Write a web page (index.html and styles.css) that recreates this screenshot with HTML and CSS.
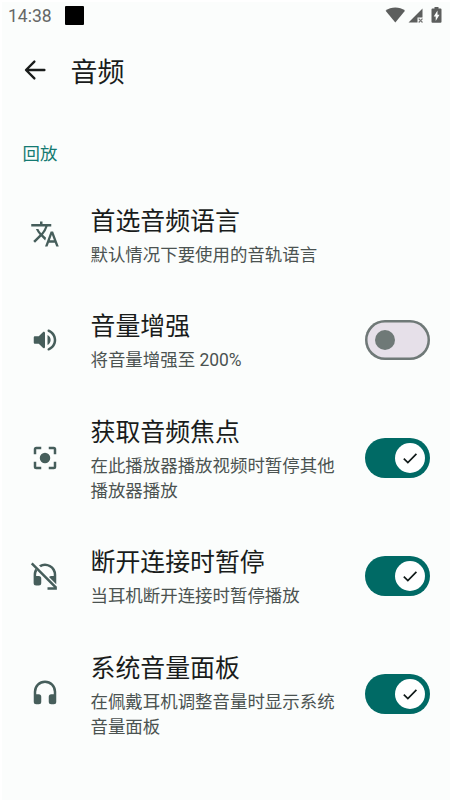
FILE: index.html
```html
<!DOCTYPE html>
<html lang="zh-CN">
<head>
<meta charset="utf-8">
<title>音频</title>
<link rel="stylesheet" href="styles.css">
</head>
<body>
<div class="screen">
  <div class="statusbar">
    <span class="clock">14:38</span>
    <span class="notice"></span>
    <svg class="status-icons" viewBox="0 0 60 20">
      <path d="M.6 5.700C6 1.400 14.600 1.400 20 5.700L10.300 17.500Z"/>
      <path d="M37.500 3.500V12.500H32.500V17.500H23.500Z"/>
      <path class="cross" d="M33.700 13.700l3.800 3.800m0-3.800l-3.800 3.800"/>
      <path fill-rule="evenodd" d="M49.500 2h4v1.500h2q1 0 1 1V16.700q0 1-1 1h-8q-1 0-1-1V4.500q0-1 1-1h2ZM52.500 5.500L48.700 11.500h2V16L54.500 9.800h-2Z"/>
    </svg>
  </div>
  <header class="appbar">
    <svg class="icon back" viewBox="0 0 24 24"><path d="M19.500 12H5.300M11.500 5.300L4.800 12l6.700 6.700"/></svg>
    <h1>音频</h1>
  </header>
  <h2 class="section">回放</h2>
  <main>
    <div class="row">
      <svg class="icon" viewBox="0 0 24 24"><path d="M12.870 15.070l-2.540-2.510.030-.030A17.520 17.520 0 0 0 14.070 6H17V4h-7V2H8v2H1v1.990h11.170C11.500 7.920 10.440 9.750 9 11.350 8.070 10.320 7.300 9.190 6.690 8h-2c.73 1.630 1.730 3.170 2.980 4.560l-5.090 5.020L4 19l5-5 3.110 3.110.760-2.040zM18.500 10h-2L12 22h2l1.120-3h4.750L21 22h2l-4.500-12zm-2.620 7l1.620-4.330L19.120 17h-3.240z"/></svg>
      <div class="text"><h3>首选音频语言</h3><p>默认情况下要使用的音轨语言</p></div>
    </div>
    <div class="row">
      <svg class="icon" viewBox="0 0 24 24"><path d="M3 10v4c0 .55.450 1 1 1h3l3.290 3.290c.63.630 1.710.180 1.710-.710V6.410c0-.89-1.080-1.340-1.710-.710L7 9H4c-.55 0-1 .450-1 1zm13.500 2A4.500 4.500 0 0 0 14 7.970v8.050c1.480-.73 2.500-2.250 2.500-4.020zM14 4.450v.2c0 .380.250.710.600.850C17.180 6.530 19 9.060 19 12s-1.820 5.470-4.400 6.500c-.36.140-.6.470-.6.850v.2c0 .630.630 1.070 1.210.850C18.600 19.110 21 15.840 21 12s-2.400-7.110-5.790-8.400c-.58-.23-1.210.220-1.210.850z"/></svg>
      <div class="text"><h3>音量增强</h3><p>将音量增强至 200%</p></div>
      <div class="switch"><span class="thumb"></span></div>
    </div>
    <div class="row">
      <svg class="icon" viewBox="0 0 24 24"><circle cx="12" cy="12" r="4.200"/><path class="line" d="M4 9V5q0-1 1-1h4M15 4h4q1 0 1 1v4M20 15v4q0 1-1 1h-4M9 20H5q-1 0-1-1v-4"/></svg>
      <div class="text"><h3>获取音频焦点</h3><p>在此播放器播放视频时暂停其他播放器播放</p></div>
      <div class="switch on"><span class="thumb"><svg viewBox="0 0 16 16"><path d="M2.500 8.500l3.600 3.600L13.700 4.300"/></svg></span></div>
    </div>
    <div class="row">
      <svg class="icon" viewBox="0 0 24 24"><path d="M2.900 11C2.900 9.200 3.400 7.600 4.300 6.200L5.800 7.700C5.200 8.700 4.900 9.800 4.900 11v1H7q2 0 2 2v3.500q0 2-2 2H4.900q-2 0-2-2ZM7.200 3.400A9 9 0 0 1 21 11v7.600L16.600 14.100L15.200 12.700Q16 12 17 12h2v-1A7 7 0 0 0 8.700 4.900Z"/><path class="line" d="M1.400 1.900L21 21.500M14 22h7.500"/></svg>
      <div class="text"><h3>断开连接时暂停</h3><p>当耳机断开连接时暂停播放</p></div>
      <div class="switch on"><span class="thumb"><svg viewBox="0 0 16 16"><path d="M2.500 8.500l3.600 3.600L13.700 4.300"/></svg></span></div>
    </div>
    <div class="row">
      <svg class="icon" viewBox="0 0 24 24"><path d="M12 1.200a9 9 0 0 0-9 9V18.200a2 2 0 0 0 2 2h2a2 2 0 0 0 2-2v-4a2 2 0 0 0-2-2H5v-2a7 7 0 0 1 14 0v2h-2a2 2 0 0 0-2 2v4a2 2 0 0 0 2 2h2a2 2 0 0 0 2-2V10.200a9 9 0 0 0-9-9z"/></svg>
      <div class="text"><h3>系统音量面板</h3><p>在佩戴耳机调整音量时显示系统音量面板</p></div>
      <div class="switch on"><span class="thumb"><svg viewBox="0 0 16 16"><path d="M2.500 8.500l3.600 3.600L13.700 4.300"/></svg></span></div>
    </div>
  </main>
</div>
</body>
</html>
```

FILE: styles.css
```css
* { box-sizing: border-box; }
body {
  margin: 0;
  background: #fff;
  font-family: Roboto, "Noto Sans CJK SC", sans-serif;
}
h1, h2, h3, p { margin: 0; font-weight: 400; }
svg { display: block; }
.screen {
  height: 800px;
  overflow: hidden;
  border: solid #fff;
  border-width: 2px 0 0 2px;
  background: #fbfdfc;
}
.statusbar {
  display: flex;
  align-items: center;
  height: 28px;
  padding: 0 5px 2px 6px;
  color: #656766;
}
.clock { width: 57px; padding-top: 1px; font-size: 17.5px; line-height: 24px; }
.notice { width: 19px; height: 19px; background: #000; border-radius: 1px; }
.status-icons {
  width: 60px;
  height: 20px;
  margin-left: auto;
  fill: #5c5e5d;
}
.status-icons .cross { fill: none; stroke: #777; stroke-width: 1.2; }
.appbar {
  display: flex;
  align-items: center;
  height: 80px;
  padding-left: 18px;
  color: #191c1b;
}
.appbar h1 { margin-left: 20.5px; padding-top: 5px; font-size: 27px; line-height: 40px; }
.icon { flex: none; width: 30px; height: 30px; fill: #465e5b; }
.icon .line { fill: none; stroke: #465e5b; stroke-width: 2; }
.back { fill: none; stroke: #191c1b; stroke-width: 1.9; stroke-linecap: round; stroke-linejoin: round; }
.section {
  height: 71.5px;
  padding: 32px 0 0 20.5px;
  color: #147a72;
  font-size: 17.4px;
  line-height: 25px;
}
.row {
  display: flex;
  align-items: center;
  height: 105.500px;
  padding: 0 20px 0 28px;
}
.row:nth-child(3), .row:nth-child(5) { height: 130.500px; }
.text { flex: 1; margin: 3px 0 0 30.5px; }
h3 { margin-bottom: 4px; color: #191c1b; font-size: 24.9px; line-height: 35px; }
.text p { color: #4b5351; font-size: 17.45px; line-height: 25px; }
.switch {
  display: flex;
  align-items: center;
  flex: none;
  width: 65px;
  height: 40px;
  margin-left: 28px;
  padding-left: 7.5px;
  border-radius: 20px;
  background: #e6e0e9;
  box-shadow: inset 0 0 0 2.5px #6f7977;
}
.switch .thumb { width: 20px; height: 20px; margin-left: 2.5px; border-radius: 50%; background: #6f7977; }
.switch.on { justify-content: flex-end; padding: 0 5px 0 0; background: #006a65; box-shadow: none; }
.on .thumb { display: grid; place-items: center; width: 30px; height: 30px; background: #fff; }
.thumb svg { width: 18px; height: 18px; fill: none; stroke: #101918; stroke-width: 1.5; }
```
